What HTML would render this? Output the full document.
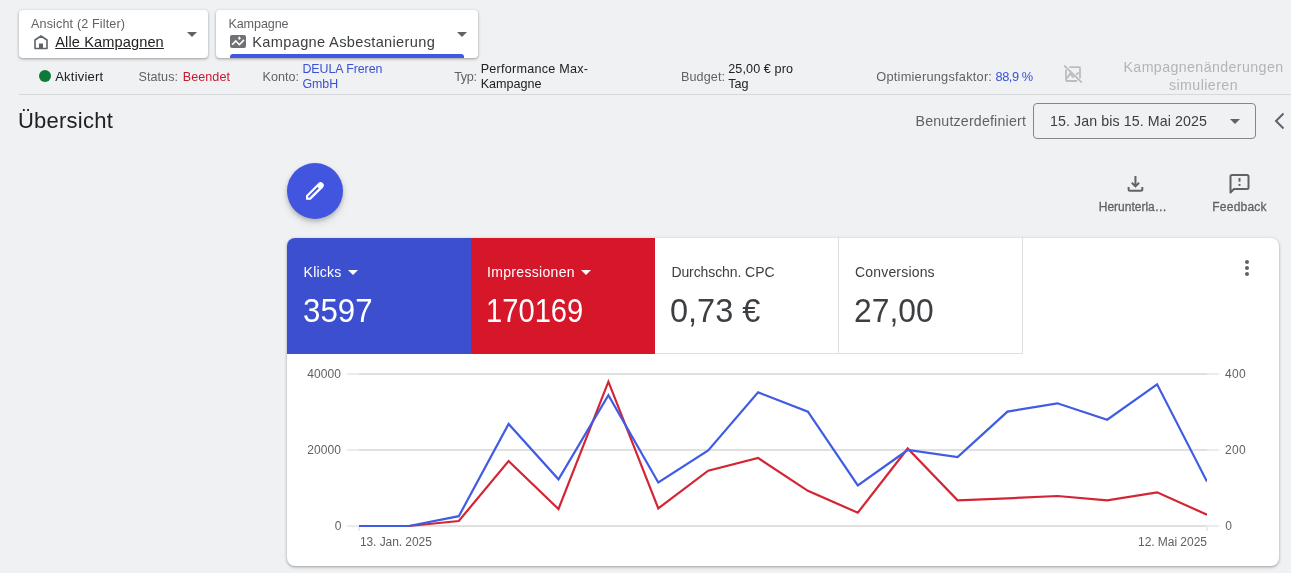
<!DOCTYPE html>
<html><head><meta charset="utf-8"><style>
html,body{margin:0;padding:0;width:1291px;height:573px;overflow:hidden;background:#f0f1f3;font-family:"Liberation Sans", sans-serif;}
#r{position:absolute;left:0;top:0;width:1291px;height:573px;will-change:transform;}
.t{position:absolute;white-space:nowrap;}
.a{position:absolute;}
.card{position:absolute;background:#fff;box-shadow:0 1px 2px rgba(60,64,67,.3),0 1px 3px 1px rgba(60,64,67,.15);}
</style></head><body><div id="r">
<div class="card" style="left:19px;top:10px;width:189px;height:48px;border-radius:4px"></div>
<div class="card" style="left:216px;top:10px;width:262px;height:48px;border-radius:4px;overflow:hidden"><div style="position:absolute;left:14px;top:44px;width:234px;height:4px;background:#4157df;border-radius:3px 3px 0 0"></div></div>
<svg class="a" style="left:33px;top:34px" width="16" height="16" viewBox="0 0 16 16"><path d="M2 14.5V6L8 2l6 4v8.5z" fill="none" stroke="#5f6368" stroke-width="1.6" stroke-linejoin="round"/><rect x="6" y="9.5" width="4" height="5" fill="#5f6368"/></svg>
<svg class="a" style="left:230px;top:35.4px" width="16" height="13" viewBox="0 0 16 13"><rect x="0" y="0" width="16" height="13" rx="2" fill="#6f7174"/><path d="M2.1 9.7l3.7-3.8 3.6 3.8 4.6-4.8" fill="none" stroke="#fff" stroke-width="1.6"/><path d="M9.4 1.3l1.5 1.9-1.5 1.9-1.5-1.9z" fill="#fff"/></svg>
<div class="a" style="left:187px;top:32px;width:0;height:0;border-left:5.0px solid transparent;border-right:5.0px solid transparent;border-top:5px solid #5f6368"></div>
<div class="a" style="left:457px;top:32px;width:0;height:0;border-left:5.0px solid transparent;border-right:5.0px solid transparent;border-top:5px solid #5f6368"></div>
<div class="a" style="left:39px;top:70px;width:12px;height:12px;border-radius:50%;background:#0d7a35"></div>
<svg class="a" style="left:0;top:0" width="1291" height="573"><g fill="none" stroke="#bdbdbd" stroke-width="1.8"><path d="M1069.3 67.1H1079.1a.9 .9 0 0 1 .9 .9V78.2"/><path d="M1066 69.8V80.1a.9 .9 0 0 0 .9 .9H1077.2"/><path d="M1064.1 65.5L1081.9 82.6"/></g><g fill="none" stroke="#bdbdbd" stroke-width="1.8"><path d="M1066.8 78.6L1070.1 73.6L1073.6 77.6"/><path d="M1076.2 74.8L1078.6 72.4"/></g></svg>
<div class="a" style="left:19px;top:94px;width:1272px;height:1px;background:#d6d8dc"></div>
<div class="a" style="left:1033px;top:103px;width:221px;height:34px;border:1px solid #80868b;border-radius:4px"></div>
<div class="a" style="left:1230px;top:119px;width:0;height:0;border-left:5.0px solid transparent;border-right:5.0px solid transparent;border-top:5px solid #5f6368"></div>
<svg class="a" style="left:1272px;top:111px" width="14" height="20" viewBox="0 0 14 20"><path d="M11.5 2.5L4 10l7.5 7.5" fill="none" stroke="#5f6368" stroke-width="2"/></svg>
<div class="a" style="left:287px;top:163px;width:56px;height:56px;border-radius:50%;background:#4255df;box-shadow:0 2px 4px rgba(0,0,0,.2),0 4px 8px rgba(0,0,0,.12)"></div>
<svg class="a" style="left:0;top:0" width="1291" height="573"><path d="M306 195.4V199.8H310.7L322.85 187.65A3.2 3.2 0 0 0 318.15 183.25Z" fill="#fff"/><path d="M308.4 197.4L318.2 187.6" stroke="#4255df" stroke-width="1.9"/></svg>
<svg class="a" style="left:1125px;top:173px" width="21" height="21" viewBox="0 0 21 21"><path d="M10.45 3v10M6.8 9.8l3.65 3.65L14.1 9.8" fill="none" stroke="#5f6368" stroke-width="2"/><path d="M3.6 14v2.3a1.5 1.5 0 0 0 1.5 1.5h10.7a1.5 1.5 0 0 0 1.5-1.5V14" fill="none" stroke="#5f6368" stroke-width="2"/></svg>
<svg class="a" style="left:1228px;top:173px" width="23" height="22" viewBox="0 0 23 22"><path d="M2.5 19.5V3.5a1.5 1.5 0 0 1 1.5-1.5h15a1.5 1.5 0 0 1 1.5 1.5v11a1.5 1.5 0 0 1-1.5 1.5H6z" fill="none" stroke="#5f6368" stroke-width="2" stroke-linejoin="round"/><path d="M11.5 5v3.7" stroke="#5f6368" stroke-width="2"/><path d="M11.5 10.9v2" stroke="#5f6368" stroke-width="2"/></svg>
<div class="card" style="left:287px;top:238px;width:992px;height:328px;border-radius:8px;overflow:hidden"><div style="position:absolute;left:0;top:0;width:184px;height:116px;background:#3b4fcf"></div><div style="position:absolute;left:184px;top:0;width:184px;height:116px;background:#d6172a"></div><div style="position:absolute;left:368px;top:0;width:184px;height:116px;border-right:1px solid #e0e0e0;border-bottom:1px solid #e0e0e0;box-sizing:border-box"></div><div style="position:absolute;left:551px;top:0;width:185px;height:116px;border-right:1px solid #e0e0e0;border-bottom:1px solid #e0e0e0;box-sizing:border-box"></div></div>
<div class="a" style="left:348px;top:270px;width:0;height:0;border-left:5.0px solid transparent;border-right:5.0px solid transparent;border-top:5px solid #fff"></div>
<div class="a" style="left:581px;top:270px;width:0;height:0;border-left:5.0px solid transparent;border-right:5.0px solid transparent;border-top:5px solid #fff"></div>
<div class="a" style="left:1245px;top:260px;width:4px;height:4px;border-radius:50%;background:#5f6368"></div>
<div class="a" style="left:1245px;top:266px;width:4px;height:4px;border-radius:50%;background:#5f6368"></div>
<div class="a" style="left:1245px;top:272px;width:4px;height:4px;border-radius:50%;background:#5f6368"></div>
<svg class="a" style="left:0;top:0" width="1291" height="573"><rect x="347" y="373" width="12" height="2" fill="#ececec"/><rect x="359" y="373" width="848" height="2" fill="#e0e0e0"/><rect x="1207" y="373" width="12" height="2" fill="#ececec"/><rect x="347" y="449" width="12" height="2" fill="#ececec"/><rect x="359" y="449" width="848" height="2" fill="#e0e0e0"/><rect x="1207" y="449" width="12" height="2" fill="#ececec"/><rect x="347" y="525" width="12" height="2" fill="#ececec"/><rect x="359" y="525" width="848" height="2" fill="#e0e0e0"/><rect x="1207" y="525" width="12" height="2" fill="#ececec"/><rect x="358" y="526" width="2" height="5" fill="#ececec"/><rect x="1206" y="526" width="2" height="5" fill="#ececec"/><clipPath id="cp"><rect x="340" y="360" width="867" height="180"/></clipPath><polyline clip-path="url(#cp)" points="359.0,526.0 408.9,526.0 458.8,521.0 508.6,461.0 558.5,509.0 608.4,381.7 658.3,508.4 708.2,470.7 758.1,458.0 807.9,490.8 857.8,512.7 907.7,448.5 957.6,500.3 1007.5,498.3 1057.4,496.0 1107.2,500.3 1157.1,492.3 1207.0,514.7" fill="none" stroke="#d32533" stroke-width="2.2"/><polyline clip-path="url(#cp)" points="359.0,526.0 408.9,526.0 458.8,516.2 508.6,424.0 558.5,479.3 608.4,395.2 658.3,482.5 708.2,450.5 758.1,392.4 807.9,411.6 857.8,485.4 907.7,450.0 957.6,457.1 1007.5,411.6 1057.4,403.3 1107.2,419.7 1157.1,384.3 1207.0,481.6" fill="none" stroke="#3f5ce3" stroke-width="2.2"/></svg>
<div class="t" style="left:31.00px;top:18px;font-size:12.6px;line-height:12.6px;color:#5f6368;letter-spacing:0.136px;">Ansicht (2 Filter)</div>
<div class="t" style="left:55.20px;top:35px;font-size:14.6px;line-height:14.6px;color:#202124;letter-spacing:0.112px;text-decoration:underline;text-underline-offset:0.5px;">Alle Kampagnen</div>
<div class="t" style="left:228.40px;top:18px;font-size:12.6px;line-height:12.6px;color:#5f6368;letter-spacing:-0.102px;">Kampagne</div>
<div class="t" style="left:252.30px;top:35px;font-size:14.6px;line-height:14.6px;color:#3c4043;letter-spacing:0.327px;">Kampagne Asbestanierung</div>
<div class="t" style="left:55.20px;top:70px;font-size:13px;line-height:13px;color:#202124;letter-spacing:0.226px;">Aktiviert</div>
<div class="t" style="left:138.50px;top:71px;font-size:12.6px;line-height:12.6px;color:#5f6368;letter-spacing:0.051px;">Status:</div>
<div class="t" style="left:182.70px;top:71px;font-size:12.6px;line-height:12.6px;color:#c41a30;letter-spacing:0.064px;">Beendet</div>
<div class="t" style="left:262.50px;top:71px;font-size:12.6px;line-height:12.6px;color:#5f6368;letter-spacing:0.017px;">Konto:</div>
<div class="t" style="left:302.40px;top:63px;font-size:12.4px;line-height:12.4px;color:#3a51d3;letter-spacing:-0.053px;">DEULA Freren</div>
<div class="t" style="left:302.40px;top:78px;font-size:12.4px;line-height:12.4px;color:#3a51d3;">GmbH</div>
<div class="t" style="left:454.20px;top:71px;font-size:12.6px;line-height:12.6px;color:#5f6368;letter-spacing:-0.335px;">Typ:</div>
<div class="t" style="left:480.70px;top:63px;font-size:12.6px;line-height:12.6px;color:#202124;letter-spacing:0.248px;">Performance Max-</div>
<div class="t" style="left:480.70px;top:78px;font-size:12.6px;line-height:12.6px;color:#202124;">Kampagne</div>
<div class="t" style="left:680.90px;top:71px;font-size:12.6px;line-height:12.6px;color:#5f6368;letter-spacing:0.114px;">Budget:</div>
<div class="t" style="left:728.20px;top:63px;font-size:12.6px;line-height:12.6px;color:#202124;letter-spacing:0.107px;">25,00 € pro</div>
<div class="t" style="left:728.20px;top:78px;font-size:12.6px;line-height:12.6px;color:#202124;">Tag</div>
<div class="t" style="left:876.30px;top:71px;font-size:12.8px;line-height:12.8px;color:#5f6368;letter-spacing:0.220px;">Optimierungsfaktor:</div>
<div class="t" style="left:995.60px;top:71px;font-size:12.8px;line-height:12.8px;color:#3a51d3;letter-spacing:-0.484px;">88,9 %</div>
<div class="t" style="left:1123.48px;top:60px;font-size:14.2px;line-height:14.2px;color:#b4b4b4;letter-spacing:0.409px;">Kampagnenänderungen</div>
<div class="t" style="left:1169.03px;top:78px;font-size:14.2px;line-height:14.2px;color:#b4b4b4;letter-spacing:0.431px;">simulieren</div>
<div class="t" style="left:18.00px;top:110px;font-size:22px;line-height:22px;color:#202124;letter-spacing:0.230px;">Übersicht</div>
<div class="t" style="left:915.50px;top:114px;font-size:14.2px;line-height:14.2px;color:#5f6368;letter-spacing:0.192px;">Benutzerdefiniert</div>
<div class="t" style="left:1050.00px;top:114px;font-size:14.2px;line-height:14.2px;color:#3c4043;letter-spacing:0.102px;">15. Jan bis 15. Mai 2025</div>
<div class="t" style="left:1098.80px;top:201px;font-size:12px;line-height:12px;color:#5f6368;letter-spacing:-0.007px;-webkit-text-stroke:0.3px #5f6368;">Herunterla…</div>
<div class="t" style="left:1212.30px;top:201px;font-size:12px;line-height:12px;color:#5f6368;letter-spacing:0.222px;-webkit-text-stroke:0.3px #5f6368;">Feedback</div>
<div class="t" style="left:303.60px;top:265px;font-size:14px;line-height:14px;color:#fff;letter-spacing:0.231px;">Klicks</div>
<div class="t" style="left:303.00px;top:295px;font-size:32.5px;line-height:32.5px;color:#fff;transform:scaleX(0.9625);transform-origin:0 0;">3597</div>
<div class="t" style="left:487.00px;top:265px;font-size:14px;line-height:14px;color:#fff;letter-spacing:0.325px;">Impressionen</div>
<div class="t" style="left:486.00px;top:295px;font-size:32.5px;line-height:32.5px;color:#fff;transform:scaleX(0.8972);transform-origin:0 0;">170169</div>
<div class="t" style="left:671.40px;top:265px;font-size:14px;line-height:14px;color:#3c4043;letter-spacing:-0.088px;">Durchschn. CPC</div>
<div class="t" style="left:670.20px;top:295px;font-size:32.5px;line-height:32.5px;color:#3c4043;transform:scaleX(1.0004);transform-origin:0 0;">0,73 €</div>
<div class="t" style="left:855.00px;top:265px;font-size:14px;line-height:14px;color:#3c4043;letter-spacing:0.179px;">Conversions</div>
<div class="t" style="left:854.00px;top:295px;font-size:32.5px;line-height:32.5px;color:#3c4043;transform:scaleX(0.9786);transform-origin:0 0;">27,00</div>
<div class="t" style="left:307.20px;top:368px;font-size:12px;line-height:12px;color:#616161;letter-spacing:0.096px;">40000</div>
<div class="t" style="left:307.20px;top:444px;font-size:12px;line-height:12px;color:#616161;letter-spacing:0.096px;">20000</div>
<div class="t" style="left:334.70px;top:520px;font-size:12px;line-height:12px;color:#616161;">0</div>
<div class="t" style="left:1225.00px;top:368px;font-size:12px;line-height:12px;color:#616161;letter-spacing:0.314px;">400</div>
<div class="t" style="left:1225.00px;top:444px;font-size:12px;line-height:12px;color:#616161;letter-spacing:0.314px;">200</div>
<div class="t" style="left:1225.20px;top:520px;font-size:12px;line-height:12px;color:#616161;">0</div>
<div class="t" style="left:359.90px;top:536px;font-size:12px;line-height:12px;color:#616161;letter-spacing:-0.065px;">13. Jan. 2025</div>
<div class="t" style="left:1138.00px;top:536px;font-size:12px;line-height:12px;color:#616161;letter-spacing:-0.039px;">12. Mai 2025</div>
</div></body></html>
